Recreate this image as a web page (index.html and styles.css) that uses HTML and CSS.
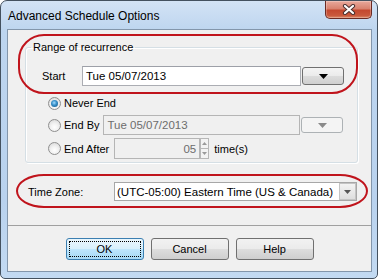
FILE: index.html
```html
<!DOCTYPE html>
<html>
<head>
<meta charset="utf-8">
<link rel="stylesheet" href="styles.css">
</head>
<body>
<div class="window">
  <div class="titlebar">
    <span class="title">Advanced Schedule Options</span>
    <div class="close">
      <svg width="14" height="11" viewBox="0 0 14 11">
        <path d="M3 2 L11 9 M11 2 L3 9" stroke="#4a3030" stroke-width="4.2" stroke-linecap="round" fill="none"/>
        <path d="M3 2 L11 9 M11 2 L3 9" stroke="#ffffff" stroke-width="2.2" stroke-linecap="round" fill="none"/>
      </svg>
    </div>
  </div>
  <div class="client">
    <div class="upper">
      <fieldset class="group">
        <legend>Range of recurrence</legend>
        <div class="start-row">
          <span class="start-lbl">Start</span>
          <div class="input start-input">Tue 05/07/2013</div>
          <div class="ddbtn">
            <svg width="9" height="5" viewBox="0 0 9 5"><path d="M0 0 H9 L4.5 5 Z" fill="#000"/></svg>
          </div>
        </div>
        <div class="radio-row never-row">
          <span class="radio checked"></span><span class="rlabel">Never End</span>
        </div>
        <div class="radio-row endby-row">
          <span class="radio"></span><span class="rlabel">End By</span>
          <div class="input disabled endby-input">Tue 05/07/2013</div>
          <div class="ddbtn disabled-btn">
            <svg width="9" height="5" viewBox="0 0 9 5"><path d="M0 0 H9 L4.5 5 Z" fill="#8a8a8a"/></svg>
          </div>
        </div>
        <div class="radio-row endafter-row">
          <span class="radio"></span><span class="rlabel">End After</span>
          <div class="input disabled count-input">05</div>
          <div class="spinner">
            <div class="spin up"><svg width="5" height="3" viewBox="0 0 5 3"><path d="M0 3 H5 L2.5 0 Z" fill="#9a9a9a"/></svg></div>
            <div class="spin down"><svg width="5" height="3" viewBox="0 0 5 3"><path d="M0 0 H5 L2.5 3 Z" fill="#9a9a9a"/></svg></div>
          </div>
          <span class="times">time(s)</span>
        </div>
      </fieldset>
      <div class="tz-row">
        <span class="tz-lbl">Time Zone:</span>
        <div class="select">
          <span class="sel-text">(UTC-05:00) Eastern Time (US &amp; Canada)</span>
          <div class="selbtn">
            <svg width="7" height="4" viewBox="0 0 7 4"><path d="M0 0 H7 L3.5 4 Z" fill="#555"/></svg>
          </div>
        </div>
      </div>
    </div>
    <div class="footer">
      <div class="btn default"><span class="focus">OK</span></div>
      <div class="btn">Cancel</div>
      <div class="btn">Help</div>
    </div>
    <div class="mark mark-range"></div>
    <div class="mark mark-tz"></div>
  </div>
</div>
</body>
</html>
```

FILE: styles.css
```css
html, body {
  margin: 0;
  padding: 0;
  background: #ffffff;
}
body {
  width: 378px;
  height: 279px;
  overflow: hidden;
  font-family: "Liberation Sans", Arial, sans-serif;
  font-size: 11px;
  color: #000;
}
.window {
  box-sizing: border-box;
  width: 378px;
  height: 279px;
  border: 1px solid #44515f;
  border-radius: 7px 7px 5px 5px;
  background: linear-gradient(to bottom, #d3e3f5 0px, #bdd5ef 30px, #b9d2ee 200px, #c3daf2 279px);
  display: flex;
  flex-direction: column;
}
.titlebar {
  height: 28px;
  display: flex;
  justify-content: space-between;
  align-items: flex-start;
  flex-shrink: 0;
}
.title {
  font-size: 12px;
  margin: 8px 0 0 7px;
  color: #000;
}
.close {
  width: 45px;
  height: 17px;
  margin-right: 5px;
  border: 1px solid #6b2b24;
  border-top: none;
  border-radius: 0 0 5px 5px;
  background: linear-gradient(to bottom, #e9a99c 0%, #d9826f 45%, #c4482f 55%, #c9583c 85%, #dc8a6a 100%);
  display: flex;
  align-items: center;
  justify-content: center;
  box-shadow: inset 0 0 0 1px rgba(255,255,255,0.25);
}
.client {
  position: relative;
  width: 363px;
  height: 241px;
  margin-left: 6px;
  border: 1px solid #8396ab;
  background: #f0f0f0;
}
.upper {
  height: 195px;
  padding-top: 10px;
  box-sizing: border-box;
}
.group {
  margin: 0 0 0 17px;
  padding: 0 0 3px 0;
  width: 331px;
  box-sizing: content-box;
  border: 1px solid #d5dfe5;
  border-radius: 3px;
  box-shadow: inset 1px 1px 0 #fff, 1px 1px 0 #fff;
  min-width: 0;
}
.group legend {
  margin-left: 5px;
  padding: 0 2px;
  line-height: 14px;
}
.start-row {
  display: flex;
  align-items: center;
  margin-top: 12px;
  height: 20px;
}
.start-lbl {
  width: 40px;
  padding-left: 16px;
}
.input {
  box-sizing: border-box;
  height: 20px;
  border: 1px solid #abadb3;
  border-top-color: #9da0a8;
  background: #fff;
  padding: 0 3px;
  display: flex;
  align-items: center;
  font-size: 11.5px;
}
.start-input {
  width: 219px;
}
.ddbtn {
  box-sizing: border-box;
  width: 42px;
  height: 18px;
  margin-left: 1px;
  border: 1px solid #707070;
  border-radius: 3px;
  background: linear-gradient(to bottom, #f4f4f4 0%, #ebebeb 48%, #dcdcdc 52%, #cfcfcf 100%);
  display: flex;
  align-items: center;
  justify-content: center;
}
.disabled-btn {
  height: 16px;
  border-color: #adb2b5;
  background: #f4f4f4;
}
.radio-row {
  display: flex;
  align-items: center;
  padding-left: 22px;
}
.never-row {
  margin-top: 9px;
  height: 16px;
}
.endby-row {
  margin-top: 4px;
  height: 20px;
}
.endafter-row {
  margin-top: 3px;
  height: 21px;
}
.radio {
  box-sizing: border-box;
  width: 13px;
  height: 13px;
  border-radius: 50%;
  border: 1px solid #8f8f8f;
  background: radial-gradient(circle at 50% 65%, #ffffff 0%, #f2f2f2 40%, #d4d4d4 100%);
  position: relative;
  flex-shrink: 0;
}
.radio.checked::after {
  content: "";
  position: absolute;
  left: 2px;
  top: 2px;
  width: 7px;
  height: 7px;
  border-radius: 50%;
  background: radial-gradient(circle at 45% 40%, #a6dcff 0%, #3c94cc 40%, #0d4b7e 100%);
}
.rlabel {
  margin-left: 3px;
}
.disabled {
  background: #f0f0f0;
  border-color: #b5b5b5;
  color: #6d6d6d;
}
.endby-input {
  width: 197px;
  margin-left: 4px;
}
.count-input {
  width: 86px;
  height: 21px;
  margin-left: 5px;
  justify-content: flex-end;
  padding-right: 3px;
}
.spinner {
  display: flex;
  flex-direction: column;
  width: 9px;
  height: 21px;
}
.spin {
  box-sizing: border-box;
  flex: 1;
  border: 1px solid #b7b7b7;
  background: #f3f3f3;
  display: flex;
  align-items: center;
  justify-content: center;
}
.spin.down {
  border-top: none;
}
.times {
  margin-left: 5px;
}
.tz-row {
  display: flex;
  align-items: center;
  margin-top: 19px;
  height: 19px;
}
.tz-lbl {
  width: 86px;
  padding-left: 20px;
}
.select {
  box-sizing: border-box;
  width: 243px;
  height: 19px;
  border: 1px solid #a7a7a7;
  background: #fff;
  display: flex;
  align-items: center;
  justify-content: space-between;
  padding-left: 2px;
  font-size: 11.5px;
}
.selbtn {
  box-sizing: border-box;
  width: 17px;
  height: 17px;
  border: 1px solid #c4c4c4;
  background: linear-gradient(to bottom, #f3f3f3, #dedede);
  display: flex;
  align-items: center;
  justify-content: center;
}
.footer {
  border-top: 1px solid #a0a0a0;
  height: 45px;
  display: flex;
  justify-content: center;
  align-items: flex-start;
  gap: 7px;
  padding-top: 12px;
  box-sizing: border-box;
}
.btn {
  box-sizing: border-box;
  width: 78px;
  height: 22px;
  border: 1px solid #707070;
  border-radius: 3px;
  background: linear-gradient(to bottom, #f2f2f2 0%, #ebebeb 48%, #dddddd 52%, #cfcfcf 100%);
  display: flex;
  align-items: center;
  justify-content: center;
}
.btn.default {
  border-color: #3c7fb1;
  background: linear-gradient(to bottom, #eaf6fd 0%, #d9f0fc 48%, #bee6fd 52%, #a7d9f5 100%);
  padding: 2px;
}
.focus {
  box-sizing: border-box;
  width: 100%;
  height: 100%;
  border: 1px dotted #000;
  display: flex;
  align-items: center;
  justify-content: center;
}
.mark {
  position: absolute;
  box-sizing: border-box;
  border: 2px solid #c0141c;
  pointer-events: none;
}
.mark-range {
  left: 10px;
  top: 4px;
  width: 340px;
  height: 60px;
  border-radius: 26px;
}
.mark-tz {
  left: 8px;
  top: 144px;
  width: 352px;
  height: 34px;
  border-radius: 28px / 17px;
}
```
